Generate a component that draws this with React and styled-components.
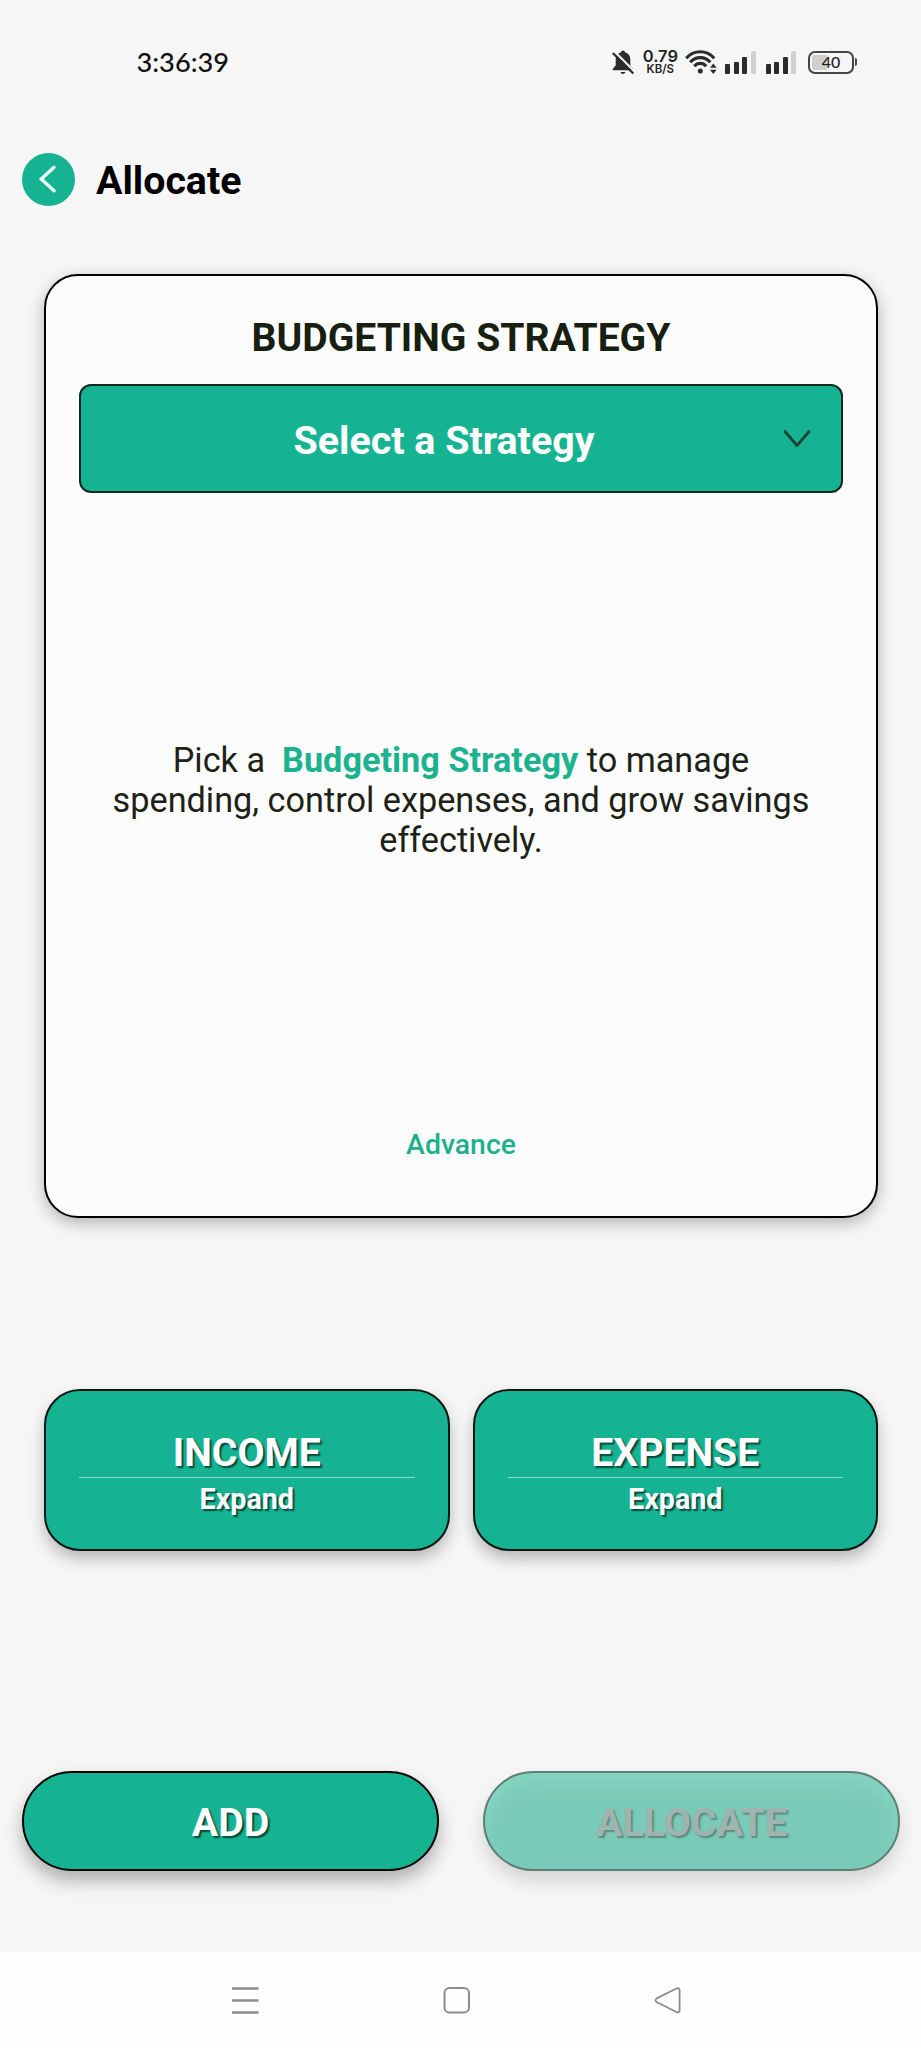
import React from "react";
import styled, { createGlobalStyle } from "styled-components";

const GREEN = "#16b393";

const GlobalStyle = createGlobalStyle`
  * { box-sizing: border-box; }
  body { margin: 0; background: #f6f6f6; font-family: Roboto, "Liberation Sans", sans-serif; }
  button { font-family: inherit; margin: 0; padding: 0; }
  svg { display: block; flex: none; }
`;

const Screen = styled.div`
  display: flex;
  flex-direction: column;
  width: 921px;
  height: 2048px;
  background: #f6f6f6;
  overflow: hidden;
`;

const StatusBar = styled.header`
  display: flex;
  align-items: center;
  justify-content: space-between;
  flex: none;
  height: 124px;
  padding: 0 64px 0 136.5px;
`;

const Clock = styled.span`
  font: 500 27.2px/32px Lato, sans-serif;
  color: #111;
`;

const StatusIcons = styled.div`
  display: flex;
  align-items: center;
`;

const NetSpeed = styled.div`
  display: flex;
  flex-direction: column;
  align-items: center;
  width: 34px;
  margin: 0 8px 0 8px;
  color: #222;
  white-space: nowrap;
`;

const SpeedValue = styled.span`
  font: 600 16.5px/14px Inter, sans-serif;
`;

const SpeedUnit = styled.span`
  font: 600 11.5px/12px Inter, sans-serif;
`;

const Bars = styled.div`
  display: flex;
  align-items: flex-end;
  gap: 3.6px;
  height: 24px;
  margin-left: ${(p) => p.$gap}px;
`;

const Bar = styled.i`
  width: 4.9px;
  height: ${(p) => p.$h}px;
  border-radius: 1px;
  background: ${(p) => (p.$off ? "#d0d0d0" : "#2b2b2b")};
`;

const Battery = styled.div`
  display: flex;
  align-items: center;
  margin-left: 12px;
`;

const BatteryBody = styled.div`
  display: flex;
  align-items: center;
  justify-content: center;
  width: 46px;
  height: 23px;
  border: 2px solid #444;
  border-radius: 7px;
  background: linear-gradient(90deg, #cfcfcf 15px, transparent 15px) 2px 0 / 100% 100% no-repeat;
  background-clip: content-box;
  padding: 2px;
  font: 500 16px/16px Lato, sans-serif;
  color: #222;
`;

const BatteryTip = styled.i`
  width: 2px;
  height: 8px;
  margin-left: 1px;
  border-radius: 0 2px 2px 0;
  background: #444;
`;

const TitleBar = styled.div`
  display: flex;
  align-items: center;
  flex: none;
  gap: 21px;
  height: 110px;
  padding: 0 22px;
`;

const BackButton = styled.button`
  display: flex;
  align-items: center;
  justify-content: center;
  width: 53px;
  height: 53px;
  border: 0;
  border-radius: 50%;
  background: ${GREEN};
`;

const PageTitle = styled.h1`
  margin: 3px 0 0;
  font-size: 39.3px;
  line-height: 46px;
  font-weight: 700;
  color: #000;
`;

const Card = styled.section`
  display: flex;
  flex-direction: column;
  flex: none;
  height: 944px;
  margin: 40px 43px 0 44px;
  padding: 39px 33px 0;
  border: 2px solid #000;
  border-radius: 34px;
  background: #fcfcfc;
  box-shadow: 0 5px 16px rgba(0, 0, 0, 0.28);
  text-align: center;
`;

const CardTitle = styled.h2`
  margin: 0;
  font-size: 39.1px;
  line-height: 46px;
  font-weight: 700;
  color: #171f10;
`;

const Select = styled.button`
  display: flex;
  align-items: center;
  flex: none;
  height: 109px;
  margin-top: 23px;
  padding: 0 30px 0 24px;
  border: 2px solid #10291f;
  border-radius: 12px;
  background: ${GREEN};
`;

const SelectLabel = styled.span`
  flex: 1;
  padding-top: 4px;
  font-size: 39.4px;
  line-height: 46px;
  font-weight: 700;
  color: #fff;
`;

const Message = styled.p`
  display: flex;
  flex-direction: column;
  justify-content: center;
  flex: 1;
  margin: 0;
  font-size: 34.25px;
  line-height: 40.3px;
  color: #1c2216;
  white-space: pre;
`;

const Highlight = styled.strong`
  font-weight: 700;
  color: #1cb28f;
`;

const AdvanceLink = styled.a`
  margin: 21px 0 55px;
  font-size: 28.4px;
  line-height: 33px;
  font-weight: 500;
  color: #1cb08d;
`;

const Tiles = styled.div`
  display: flex;
  flex: none;
  gap: 23px;
  margin: 171px 43px 0 44px;
`;

const Tile = styled.button`
  display: flex;
  flex-direction: column;
  align-items: center;
  flex: 1;
  height: 162px;
  padding: 39px 33px 0;
  border: 2px solid #061711;
  border-radius: 36px;
  background: ${GREEN};
  box-shadow: 0 8px 15px rgba(0, 0, 0, 0.25);
  color: #fff;
  text-shadow: 2px 2px 1.5px rgba(0, 0, 0, 0.6);
  font-weight: 700;
`;

const TileTitle = styled.span`
  align-self: stretch;
  height: 48px;
  border-bottom: 1px solid #8edccb;
  font-size: 39.2px;
  line-height: 46px;
`;

const TileHint = styled.span`
  margin-top: 4px;
  font-size: 28.7px;
  line-height: 34px;
`;

const Actions = styled.div`
  display: flex;
  flex: none;
  gap: 44px;
  margin: 220px 21px 0 22px;
`;

const Pill = styled.button`
  flex: 1;
  height: 100px;
  padding-top: 4px;
  border: 2px solid #000;
  border-radius: 50px;
  background: ${GREEN};
  box-shadow: 0 10px 18px rgba(0, 0, 0, 0.29);
  font-size: 39.3px;
  line-height: 46px;
  font-weight: 700;
  color: #fff;
  text-shadow: 2px 2px 1.5px rgba(0, 0, 0, 0.6);

  &:disabled {
    border-color: #5e7e76;
    background: #7acab9;
    box-shadow: 0 10px 18px rgba(0, 0, 0, 0.14), inset 0 10px 18px rgba(145, 218, 198, 0.6);
    color: #a0b3ae;
    text-shadow: 2px 2px 1.5px rgba(70, 100, 92, 0.6);
  }
`;

const NavBar = styled.nav`
  display: flex;
  align-items: center;
  justify-content: space-between;
  height: 96px;
  margin-top: auto;
  padding: 0 239px 0 231px;
  background: #fefefe;
`;

const SignalBars = ({ gap }) => (
  <Bars $gap={gap}>
    <Bar $h={10.5} />
    <Bar $h={12.5} />
    <Bar $h={17} />
    <Bar $h={23} $off />
  </Bars>
);

const BellOff = () => (
  <svg width="24" height="26" viewBox="0 0 24 26">
    <path d="M12 1.500c1.300 0 1.900.8 1.900 1.800 3.400.9 5.400 3.500 5.400 7v6.200l3 3.500v1.200H1.700V20l3-3.500v-6.200c0-3.500 2-6.100 5.400-7 0-1 .6-1.800 1.900-1.800z" fill="#2b2b2b" />
    <path d="M9.500 23h5c-.3 1.300-1.300 2-2.500 2s-2.200-.7-2.500-2z" fill="#2b2b2b" />
    <path d="M3 2l20.500 20.500" stroke="#f6f6f6" strokeWidth="2.200" />
    <path d="M1.800 4l20.500 20.500" stroke="#2b2b2b" strokeWidth="2.200" />
  </svg>
);

const Wifi = () => (
  <svg width="32" height="26" viewBox="0 0 32 26" fill="none" stroke="#2b2b2b" strokeWidth="3.200">
    <path d="M1.300 9.200C8.800.600 21.700.600 29.200 9.200" />
    <path d="M5.200 13.300c5.400-6.300 14.700-6.300 20.100 0" />
    <path d="M9.300 17.300c3.200-3.800 8.700-3.800 11.900 0" />
    <path d="M12.800 21.900a2.500 2.500 0 0 1 5 0 2.500 2.500 0 0 1-5 0z" fill="#2b2b2b" stroke="none" />
    <path d="M28.300 14.500l3.300 4.300H25zM28.300 25l3.300-4.200H25z" fill="#2b2b2b" stroke="none" />
  </svg>
);

export default function App() {
  return (
    <Screen>
      <GlobalStyle />
      <StatusBar>
        <Clock>3:36:39</Clock>
        <StatusIcons>
          <BellOff />
          <NetSpeed>
            <SpeedValue>0.79</SpeedValue>
            <SpeedUnit>KB/S</SpeedUnit>
          </NetSpeed>
          <Wifi />
          <SignalBars gap={8} />
          <SignalBars gap={10} />
          <Battery>
            <BatteryBody>40</BatteryBody>
            <BatteryTip />
          </Battery>
        </StatusIcons>
      </StatusBar>

      <TitleBar>
        <BackButton aria-label="Back">
          <svg width="20" height="30" viewBox="0 0 20 30" fill="none" stroke="#eafff8" strokeWidth="3.400" strokeLinecap="round">
            <path d="M15 3.300L2.200 15 15 26.700" />
          </svg>
        </BackButton>
        <PageTitle>Allocate</PageTitle>
      </TitleBar>

      <Card>
        <CardTitle>BUDGETING STRATEGY</CardTitle>
        <Select>
          <SelectLabel>Select a Strategy</SelectLabel>
          <svg width="28" height="20" viewBox="0 0 28 20" fill="none" stroke="#1c4238" strokeWidth="2.700" strokeLinecap="round" strokeLinejoin="round">
            <path d="M2 2.500l12 14L26 2.500" />
          </svg>
        </Select>
        <Message>
          <span>Pick a  <Highlight>Budgeting Strategy</Highlight> to manage</span>
          <span>spending, control expenses, and grow savings</span>
          <span>effectively.</span>
        </Message>
        <AdvanceLink>Advance</AdvanceLink>
      </Card>

      <Tiles>
        <Tile>
          <TileTitle>INCOME</TileTitle>
          <TileHint>Expand</TileHint>
        </Tile>
        <Tile>
          <TileTitle>EXPENSE</TileTitle>
          <TileHint>Expand</TileHint>
        </Tile>
      </Tiles>

      <Actions>
        <Pill>ADD</Pill>
        <Pill disabled>ALLOCATE</Pill>
      </Actions>

      <NavBar>
        <svg width="28" height="28" viewBox="0 0 28 28" stroke="#8c8c8c" strokeWidth="2.300">
          <path d="M1 2.500h26.500M1 14.500h26.500M1 26.500h26.500" />
        </svg>
        <svg width="28" height="28" viewBox="0 0 28 28" fill="none" stroke="#8c8c8c" strokeWidth="2">
          <rect x="1.500" y="2" width="24.500" height="24.500" rx="5" />
        </svg>
        <svg width="28" height="28" viewBox="0 0 28 28" fill="none" stroke="#8c8c8c" strokeWidth="1.800">
          <path d="M2.600 12.400L22.800 2.300Q25.600 1.500 25.600 4.500V24Q25.600 27 22.800 26.200L2.600 16Q.4 14.200 2.600 12.400z" />
        </svg>
      </NavBar>
    </Screen>
  );
}
